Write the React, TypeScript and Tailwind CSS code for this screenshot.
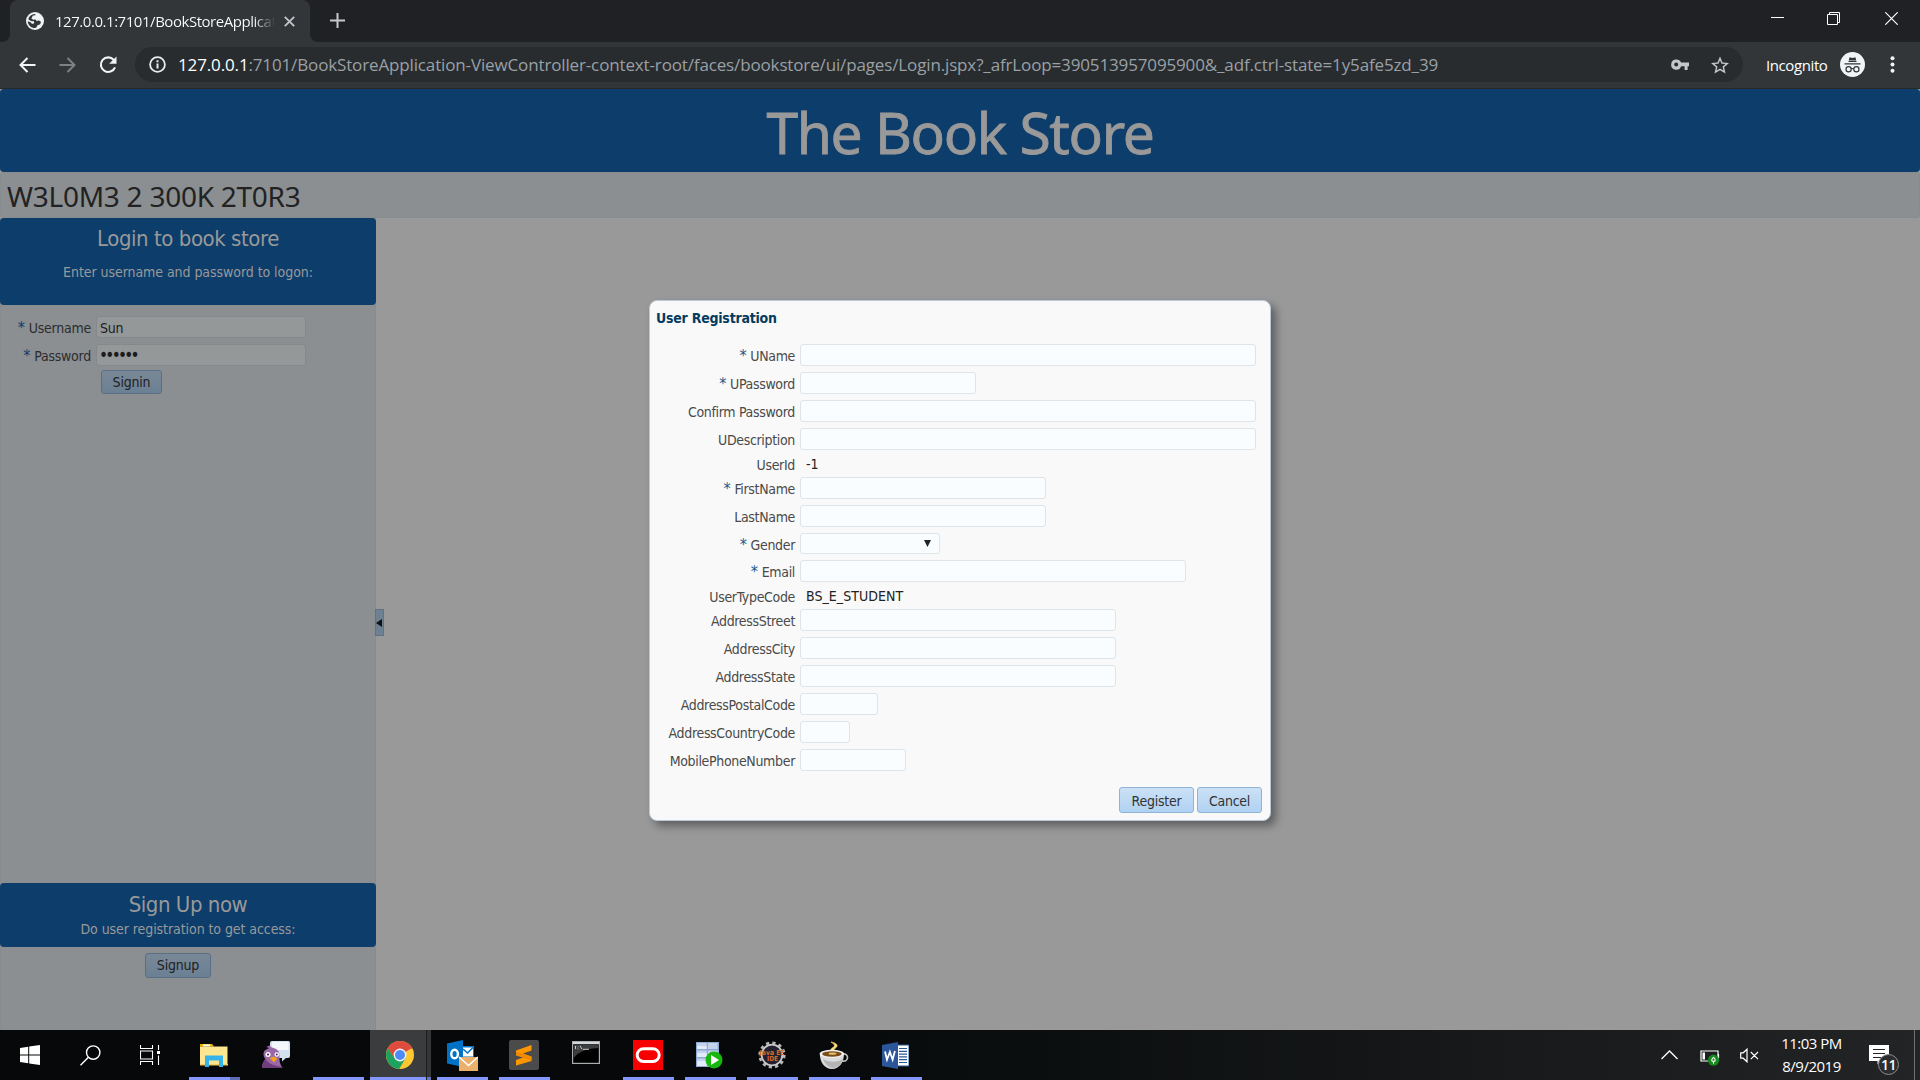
import React from "react";

const cls = (...parts: (string | false | undefined)[]) => parts.filter(Boolean).join(" ");

/* ---------- Browser chrome ---------- */

function TabStrip() {
  return (
    <div className="flex h-[42px] bg-[#202124]">
      <div className="flex w-[10px] items-end bg-[#323639]">
        <div className="h-full w-full rounded-br-[8px] bg-[#202124]" />
      </div>
      <div className="flex h-[42px] w-[300px] items-center rounded-t-[8px] bg-[#323639] pl-[16px]">
        <svg width="18" height="18" viewBox="2 2 20 20" className="shrink-0">
          <circle cx="12" cy="12" r="10" fill="#f1f3f4" />
          <path
            d="M13 5.2 9.5 6.3 8 9.2l2.2 1.3 2.6-.3 1 1.7 2.6-.4 2.2 1.2-.8 2.8-3 1.2-1.3 2.4-1.6.8c-4.4 0-7.8-3.3-7.9-7.6l3.6 1.5 1 1.6 2.5-.8-.3-2.3-3.3-.4L4.5 10C5.4 6.600 8.300 4.400 11.800 4.300z"
            fill="#323639"
          />
        </svg>
        <span className="ml-[11px] w-[220px] overflow-hidden whitespace-nowrap bg-gradient-to-r from-white from-90% to-transparent bg-clip-text text-[15px] leading-[20px] tracking-[-0.46px] text-transparent">
          127.0.0.1:7101/BookStoreApplicat
        </span>
        <svg width="11" height="11" viewBox="0 0 11 11" className="ml-[9px] shrink-0" stroke="#c0c4c8" strokeWidth="1.9">
          <path d="M.8.8l9.400 9.400M10.200.8.8 10.200" />
        </svg>
      </div>
      <div className="w-[9px] bg-[#323639]">
        <div className="h-full w-full rounded-bl-[8px] bg-[#202124]" />
      </div>
      <svg width="15" height="15" viewBox="0 0 15 15" className="ml-[11px] mt-[13px]" stroke="#c7cacd" strokeWidth="2">
        <path d="M7.500 0v15M0 7.500h15" />
      </svg>
      <div className="flex-1" />
      <svg width="13" height="13" viewBox="0 0 13 13" className="mr-[43px] mt-[12px]" stroke="#fff">
        <path d="M0 5.500h13" />
      </svg>
      <svg width="13" height="13" viewBox="0 0 13 13" className="mr-[45px] mt-[12px]" stroke="#fff" fill="none">
        <path d="M.5 2.500h10v10h-10zM2.500 2.500v-2h10v10h-2" />
      </svg>
      <svg width="13" height="13" viewBox="0 0 13 13" className="mr-[22px] mt-[12px]" stroke="#fff" strokeWidth="1.200">
        <path d="M.3.3l12.400 12.400M12.700.3.3 12.700" />
      </svg>
    </div>
  );
}

function Toolbar() {
  return (
    <div className="flex h-[47px] items-center border-b border-[#26282a] bg-[#323639] pb-[1px]">
      <svg width="17" height="16" viewBox="0 0 17 16" className="ml-[19px]" fill="none" stroke="#f1f3f4" strokeWidth="2">
        <path d="M16.500 8H2M8.500 1 1.500 8l7 7" />
      </svg>
      <svg width="17" height="16" viewBox="0 0 17 16" className="ml-[23px]" fill="none" stroke="#7d8184" strokeWidth="2">
        <path d="M.5 8H15M8.500 1l7 7-7 7" />
      </svg>
      <svg width="18" height="18" viewBox="0 0 18 18" className="ml-[23px]">
        <path d="M14.800 4A7.300 7.300 0 1 0 16 11.300" fill="none" stroke="#f1f3f4" strokeWidth="2.100" />
        <path d="M17.500.5v7.300h-7.300z" fill="#f1f3f4" />
      </svg>
      <div className="ml-[18px] flex h-[35px] w-[1608px] items-center rounded-full bg-[#282c2f] pl-[14px] pr-[14px]">
        <svg width="17" height="17" viewBox="0 0 17 17" fill="none" stroke="#e8eaed" strokeWidth="1.800">
          <circle cx="8.500" cy="8.500" r="7.400" />
          <path d="M8.500 7.500v5M8.500 4.300v1.900" strokeWidth="2" />
        </svg>
        <span className="ml-[12px] whitespace-nowrap text-[17px] leading-[24px] tracking-[-0.14px] text-[#9aa0a6]">
          <span className="text-white">127.0.0.1</span>
          :7101/BookStoreApplication-ViewController-context-root/faces/bookstore/ui/pages/Login.jspx?_afrLoop=390513957095900&_adf.ctrl-state=1y5afe5zd_39
        </span>
        <div className="flex-1" />
        <svg width="18" height="12" viewBox="0 0 18 12" fill="#c4c7ca">
          <path
            fillRule="evenodd"
            d="M5.200.6a5.100 5.100 0 1 0 4.900 6.700h3.500V11h3V7.300H18V3.600h-7.900A5.200 5.200 0 0 0 5.200.6zm0 3a2 2 0 1 1 0 4 2 2 0 0 1 0-4z"
          />
        </svg>
        <svg width="18" height="18" viewBox="2 2 20 19" className="ml-[22px]" fill="#c4c7ca">
          <path d="M22 9.240l-7.190-.62L12 2 9.190 8.630 2 9.240l5.460 4.730L5.820 21 12 17.270 18.180 21l-1.630-7.030L22 9.240zM12 15.400l-3.760 2.270 1-4.280-3.320-2.880 4.380-.38L12 6.100l1.710 4.040 4.380.38-3.320 2.880 1 4.280L12 15.400z" />
        </svg>
      </div>
      <span className="ml-[23px] w-[64px] whitespace-nowrap text-[15px] leading-[20px] tracking-[-0.4px] text-white">Incognito</span>
      <svg width="25" height="25" viewBox="0 0 25 25" className="ml-[10px]">
        <circle cx="12.500" cy="12.500" r="12.500" fill="#f1f3f4" />
        <path d="M8.700 8.500 9.600 5.200l2.900.8 2.900-.8.9 3.300z" fill="#323639" />
        <path d="M8.500 9.500h8M4.500 11.800h16" stroke="#323639" strokeWidth="1.200" />
        <g fill="none" stroke="#323639" strokeWidth="1.200">
          <circle cx="8.600" cy="17.300" r="2.600" />
          <circle cx="16.400" cy="17.300" r="2.600" />
          <path d="M11.200 17q1.300-1 2.600 0" />
        </g>
      </svg>
      <svg width="5" height="17" viewBox="0 0 5 17" className="ml-[25px]" fill="#f1f3f4">
        <circle cx="2.500" cy="2.200" r="2" />
        <circle cx="2.500" cy="8.500" r="2" />
        <circle cx="2.500" cy="14.800" r="2" />
      </svg>
    </div>
  );
}

/* ---------- Page behind the dialog ---------- */

function LoginField({ label, type, value }: { label: string; type: string; value: string }) {
  return (
    <div className="flex h-[28px] items-center">
      <div className="w-[90px] whitespace-nowrap pt-[3px] text-right text-[14px] leading-[17px] tracking-[-0.25px] text-[#2b2d2e]">
        <span className="mr-[4px] text-[16px] leading-none text-[#0d3d6b]">*</span>
        {label}
      </div>
      <input
        type={type}
        defaultValue={value}
        className={cls(
          "ml-[5px] h-[22px] w-[210px] rounded-[3px] border border-[#85898b] bg-[#959899] pt-px text-[#1c1c1c]",
          type === "password" ? "pl-[2px] pt-[3px] text-[17px] tracking-[-2.7px]" : "pl-[3px] text-[14px] tracking-[-0.3px]",
        )}
      />
    </div>
  );
}

function DimButton({ children, className }: { children: string; className: string }) {
  return (
    <button
      className={cls(
        "block rounded-[3px] border border-[#596f86] bg-gradient-to-b from-[#798896] to-[#6b8094] text-center text-[14px] leading-[20px] text-[#1f2123]",
        className,
      )}
    >
      {children}
    </button>
  );
}

function SidePanel() {
  return (
    <div className="flex w-[376px] flex-col border-x border-[#888c8e] bg-[#8b8f92]">
      <div className="-mx-px h-[87px] rounded-[4px] bg-[#0d3d6b] text-center text-[#999]">
        <div className="pt-[7px] text-[22px] leading-[28px] tracking-[-0.45px]">Login to book store</div>
        <div className="mt-[10px] text-[14px] leading-[18px] tracking-[-0.06px]">Enter username and password to logon:</div>
      </div>
      <div className="flex-1 pt-[8px]">
        <LoginField label="Username" type="text" value="Sun" />
        <LoginField label="Password" type="password" value="secret" />
        <DimButton className="ml-[100px] mt-[1px] h-[24px] w-[61px] tracking-[-0.2px]">Signin</DimButton>
      </div>
      <div className="-mx-px h-[64px] rounded-[4px] bg-[#0d3d6b] text-center text-[#999]">
        <div className="pt-[8px] text-[22px] leading-[28px] tracking-[-0.45px]">Sign Up now</div>
        <div className="mt-[1px] text-[14px] leading-[18px] tracking-[-0.07px]">Do user registration to get access:</div>
      </div>
      <div className="h-[83px]">
        <DimButton className="ml-[144px] mt-[6px] h-[25px] w-[66px] pb-[2px] tracking-[-0.2px]">Signup</DimButton>
      </div>
    </div>
  );
}

/* ---------- Registration dialog ---------- */

type Field = { label: string; required?: boolean; width?: string; text?: string; select?: boolean };

const fields: Field[] = [
  { label: "UName", required: true, width: "w-[456px]" },
  { label: "UPassword", required: true, width: "w-[176px]" },
  { label: "Confirm Password", width: "w-[456px]" },
  { label: "UDescription", width: "w-[456px]" },
  { label: "UserId", text: "-1" },
  { label: "FirstName", required: true, width: "w-[246px]" },
  { label: "LastName", width: "w-[246px]" },
  { label: "Gender", required: true, select: true },
  { label: "Email", required: true, width: "w-[386px]" },
  { label: "UserTypeCode", text: "BS_E_STUDENT" },
  { label: "AddressStreet", width: "w-[316px]" },
  { label: "AddressCity", width: "w-[316px]" },
  { label: "AddressState", width: "w-[316px]" },
  { label: "AddressPostalCode", width: "w-[78px]" },
  { label: "AddressCountryCode", width: "w-[50px]" },
  { label: "MobilePhoneNumber", width: "w-[106px]" },
];

function FormRow({ field }: { field: Field }) {
  const height = field.text ? "h-[21px]" : field.select ? "h-[27px]" : "h-[28px]";
  return (
    <div className={cls("flex items-center", height)}>
      <div className="w-[145px] whitespace-nowrap pt-[3px] text-right text-[14px] leading-[17px] tracking-[-0.33px] text-[#4a4a4a]">
        {field.required && <span className="mr-[4px] text-[16px] leading-none text-[#1c5a8c]">*</span>}
        {field.label}
      </div>
      {field.text && <span className="ml-[11px] pt-[1px] text-[14px] leading-[17px] tracking-[0.05px] text-[#222]">{field.text}</span>}
      {field.select && (
        <div className="ml-[5px] flex h-[21px] w-[140px] items-center justify-end rounded-[3px] border border-[#dfe4e7] bg-[#fafdff] pr-[8px]">
          <svg width="7" height="7" viewBox="0 0 7 7" fill="#222">
            <path d="M0 0h7L3.500 7z" />
          </svg>
        </div>
      )}
      {field.width && (
        <input className={cls("ml-[5px] h-[22px] rounded-[3px] border border-[#dfe4e7] bg-[#fafdff]", field.width)} />
      )}
    </div>
  );
}

function DialogButton({ children, className }: { children: string; className: string }) {
  return (
    <button
      className={cls(
        "h-[26px] rounded-[3px] border border-[#8fb4d6] bg-gradient-to-b from-[#cbe1f6] to-[#b0d2f2] pt-[2px] text-[14px] leading-[20px] tracking-[-0.25px] text-[#333]",
        className,
      )}
    >
      {children}
    </button>
  );
}

function RegistrationDialog() {
  return (
    <div className="absolute left-[649px] top-[300px] h-[521px] w-[622px] rounded-[8px] border border-[#b9c9d9] bg-[#f9f9f9] shadow-[5px_5px_8px_rgba(0,0,0,0.38)]">
      <h2 className="pl-[6px] pt-[8px] text-[14px] font-bold leading-[18px] tracking-[-0.23px] text-[#043b5e]">User Registration</h2>
      <div className="pt-[14px]">
        {fields.map((f) => (
          <FormRow key={f.label} field={f} />
        ))}
      </div>
      <div className="mt-[13px] flex justify-end gap-[3px] pr-[8px]">
        <DialogButton className="w-[75px]">Register</DialogButton>
        <DialogButton className="w-[65px]">Cancel</DialogButton>
      </div>
    </div>
  );
}

/* ---------- Taskbar ---------- */

function ExplorerIcon() {
  return (
    <svg width="28" height="24" viewBox="0 0 28 24">
      <path d="M0 1h12l2 2.500H0z" fill="#f5b800" />
      <path d="M0 3.500h27.500V22H0z" fill="#fde68f" />
      <path d="M0 1h2v3H0z" fill="#e7a800" />
      <path d="M3 1.500h7v1.800H3z" fill="#fff" />
      <path d="M0 21h28v1.500H0z" fill="#f2cd5c" />
      <path d="M5 24V12.500h18V24h-4v-6.500H9V24z" fill="#36b3ea" />
    </svg>
  );
}

function PidginIcon() {
  return (
    <svg width="30" height="28" viewBox="0 0 30 28">
      <path d="M11 0h16.500q1.500 0 1.500 2v13q0 2-2 2h-2l-4 3.500V17H9V2q0-2 2-2z" fill="#d3e0ef" />
      <path d="M11 1h16.500v8H11z" fill="#f3f8fd" />
      <path d="M5 5.500c1.500 0 2.500-.5 4-1 .5 1.500 1.500 2 3.500 2.500 4 1 6 4 6 7.500 0 4-.5 7 3 12.500H1c0-4 1.500-6.500 3.300-9C2.500 16 2 12.500 3 10.500c1-2 3.500-2.500 5-3.500-1-.2-2-.7-3-1.500z" fill="#9a67a8" />
      <path d="M1 27c0-4 1.500-6.500 3.300-9 4 6 12 7 16.200 8l1 1z" fill="#6f3d7d" />
      <circle cx="7" cy="13.500" r="2.500" fill="#fff" />
      <circle cx="15.800" cy="13.500" r="2.300" fill="#fff" />
      <circle cx="7" cy="13.500" r="1.100" fill="#49265a" />
      <circle cx="15.800" cy="13.500" r="1" fill="#49265a" />
      <path d="M8.500 17l4-1.500 4 2-3.500 4z" fill="#f5a11d" />
    </svg>
  );
}

function ChromeIcon() {
  return (
    <svg width="28" height="28" viewBox="0 0 28 28">
      <circle cx="14" cy="14" r="14" fill="#fbc833" />
      <path d="M14 14 1.900 7A14 14 0 0 1 26.100 7z" fill="#dd4b3e" />
      <path d="M1.900 7A14 14 0 0 0 13.200 28l6.300-10.800L8.500 17z" fill="#1da260" />
      <path d="M14 7.600h12.500L26 7A14 14 0 0 0 1.900 7l6.500 10.500z" fill="#dd4b3e" />
      <circle cx="14" cy="14" r="6.400" fill="#f1f3f4" />
      <circle cx="14" cy="14" r="5" fill="#4c8bf5" />
    </svg>
  );
}

function OutlookIcon() {
  return (
    <svg width="31" height="31" viewBox="0 0 31 31" className="ml-[2px]">
      <path d="M14 6h13v13H14z" fill="#0a74c8" />
      <path d="M15.500 7.500h10.500v9H15.500z" fill="#fff" />
      <path d="M16 9l4.500 4L26 7.500" fill="none" stroke="#0a74c8" strokeWidth="1.600" />
      <path d="M0 3.500 16 0v27L0 23.500z" fill="#0072c6" />
      <ellipse cx="7.600" cy="14" rx="3.300" ry="4.300" fill="none" stroke="#fff" strokeWidth="2.400" />
      <path d="M12 17h19v14H12z" fill="#ebb06b" />
      <path d="M12 17l9.500 8.500L31 17" fill="none" stroke="#fff" strokeWidth="1.400" />
    </svg>
  );
}

function SublimeIcon() {
  return (
    <svg width="30" height="30" viewBox="0 0 30 30">
      <rect width="30" height="30" rx="2" fill="#4b4b4b" />
      <path d="M7 10.500 22.500 5v5.500L14 13.500l8.500 3v4.500L7 25.500V20l8.500-3L7 15z" fill="#ff9800" />
      <path d="M7 15.500v-4l15.500 5.300v3.700z" fill="#ef8a00" />
    </svg>
  );
}

function TerminalIcon() {
  return (
    <svg width="28" height="23" viewBox="0 0 28 23" className="-mt-[5px]">
      <rect x=".6" y=".6" width="26.800" height="21.800" fill="#000" stroke="#a8adb0" strokeWidth="1.200" />
      <path d="M1 1h26v2.200H1z" fill="#d4d7d9" />
      <path d="M1.500 3.500h25v3.500Q10 7 1.500 17z" fill="#3b3d3e" />
      <path d="M3.500 5v3M6 5.500v.8M6 7.500v.8M8 4.800l2 3.400M11 8.300h6" stroke="#d9d9d9" strokeWidth=".9" />
    </svg>
  );
}

function OracleIcon() {
  return (
    <svg width="30" height="30" viewBox="0 0 30 30">
      <path d="M0 0h30v30H0z" fill="#f80000" />
      <rect x="4.200" y="8.700" width="22" height="12.800" rx="6.400" fill="none" stroke="#fff" strokeWidth="2.900" />
    </svg>
  );
}

function SqlDeveloperIcon() {
  return (
    <svg width="27" height="27" viewBox="0 0 27 27" className="-ml-px">
      <path d="M0 0h23v25H0z" fill="#8ea9d3" />
      <path d="M1.200 1h9.500v6H1.200zM12 1h9.500v6H12zM1.200 8.500h9.500V15H1.200zM12 8.500h9.500V15H12zM1.200 16.500h9.500V24H1.200zM12 16.500h9.500V24H12z" fill="#c3d4ec" />
      <path d="M1.200 4h9.500v3H1.200zM1.200 11h9.500v4H1.200zM1.200 19h9.500v5H1.200z" fill="#e2ebf7" />
      <circle cx="18" cy="18" r="8.500" fill="#16b80e" />
      <path d="M15 13v10l8-5z" fill="#fff" />
    </svg>
  );
}

function JavaEeIcon() {
  return (
    <svg width="34" height="30" viewBox="-2 -1 34 30">
      <circle cx="15" cy="14" r="12.300" fill="none" stroke="#b9b9b9" strokeWidth="2.600" strokeDasharray="3.200 3.240" />
      <circle cx="15" cy="14" r="10.300" fill="#25202f" stroke="#c9c9c9" strokeWidth="1.800" />
      <text x="2.500" y="13.500" fontSize="7" fontWeight="700" fill="#d9692a" fontFamily="DejaVu Sans" textLength="25" lengthAdjust="spacingAndGlyphs">
        Java EE
      </text>
      <text x="10" y="20" fontSize="7" fontWeight="700" fill="#d9692a" fontFamily="DejaVu Sans" textLength="11" lengthAdjust="spacingAndGlyphs">
        IDE
      </text>
    </svg>
  );
}

function CoffeeIcon() {
  return (
    <svg width="30" height="30" viewBox="0 0 30 30">
      <path d="M14.500 13c-3-2-4-3.500-.5-5.500 3-1.600 1-3.800-2-5.500 5.500 1 8 3.600 4.500 6-2.500 1.800-1.500 3 0 5z" fill="#f8e08c" stroke="#f1c75a" strokeWidth=".8" />
      <ellipse cx="24.500" cy="17.500" rx="4" ry="3.700" fill="none" stroke="#bdbdbd" strokeWidth="1.700" />
      <path d="M.8 13.500C.8 22 5.500 29 13 29s12-7 12-15.500z" fill="#dcdcdc" />
      <path d="M4 19c2 6 6 8.500 10 9 5-.5 8.500-3 10-9-4 3-14 4-20 0z" fill="#b5b5b5" />
      <ellipse cx="12.900" cy="13.800" rx="12.200" ry="4" fill="#f2f2f2" />
      <ellipse cx="12.900" cy="14" rx="9.800" ry="2.700" fill="#7a4d1b" />
      <ellipse cx="13.500" cy="13.600" rx="4" ry="1.200" fill="#e9c56c" />
    </svg>
  );
}

function WordIcon() {
  return (
    <svg width="27" height="27" viewBox="0 0 27 27">
      <path d="M13 3h14v21H13z" fill="#fff" stroke="#2b579a" />
      <path d="M17 6.500h8M17 9.300h8M17 12.100h8M17 14.900h8M17 17.700h8M17 20.500h8" stroke="#2b579a" strokeWidth="1.200" />
      <path d="M0 3 16 0v27L0 24z" fill="#2b579a" />
      <path d="M3 9.500l2 8.200L7.900 10l2.700 7.700 2.300-8.700" fill="none" stroke="#fff" strokeWidth="1.800" />
    </svg>
  );
}

type TaskApp = { name: string; icon?: React.ReactNode; running?: boolean; stacked?: boolean; active?: boolean };

const apps: TaskApp[] = [
  { name: "explorer", icon: <ExplorerIcon />, running: true, stacked: true },
  { name: "pidgin", icon: <PidginIcon /> },
  { name: "blank", running: true },
  { name: "chrome", icon: <ChromeIcon />, running: true, active: true },
  { name: "outlook", icon: <OutlookIcon />, running: true },
  { name: "sublime", icon: <SublimeIcon />, running: true },
  { name: "terminal", icon: <TerminalIcon /> },
  { name: "oracle", icon: <OracleIcon />, running: true },
  { name: "sqldeveloper", icon: <SqlDeveloperIcon />, running: true },
  { name: "javaee", icon: <JavaEeIcon />, running: true },
  { name: "coffee", icon: <CoffeeIcon />, running: true },
  { name: "word", icon: <WordIcon />, running: true },
];

function TaskButton({ app }: { app: TaskApp }) {
  if (app.active) {
    return (
      <div className="flex h-full w-[62px] pl-px">
        <div className="flex w-[56px] flex-col items-center bg-[#3b3c3d]">
          <div className="flex flex-1 items-center pl-[3px] pt-[2px]">{app.icon}</div>
          <div className="h-[3px] w-full bg-[#8496ff]" />
        </div>
        <div className="flex w-[5px] flex-col border-l border-[#1d1e1f] bg-[#343536]">
          <div className="flex-1" />
          <div className="h-[3px] bg-[#6774c4]" />
        </div>
      </div>
    );
  }
  return (
    <div className="flex h-full w-[62px] flex-col items-center">
      <div className="flex flex-1 items-center pr-px pt-[3px]">{app.icon}</div>
      <div className="flex h-[3px] w-[51px]">
        {app.running && <div className="flex-1 bg-[#8496ff]" />}
        {app.stacked && <div className="w-[10px] bg-[#5f6bb5]" />}
      </div>
    </div>
  );
}

function Taskbar() {
  return (
    <div className="flex h-[50px] items-center bg-gradient-to-r from-[#060809] from-40% to-[#222425] text-white">
      <div className="flex w-[60px] justify-center">
        <svg width="20" height="20" viewBox="0 0 20 20" fill="#fff">
          <path d="M0 3l8.200-1.200v7.700H0zM9.200 1.600 20 0v9.500H9.200zM0 10.500h8.200v7.800L0 17.100zM9.200 10.500H20V20L9.200 18.400z" />
        </svg>
      </div>
      <div className="flex w-[60px] justify-center">
        <svg width="21" height="21" viewBox="0 0 21 21" fill="none" stroke="#fff" strokeWidth="1.400">
          <circle cx="13.200" cy="7.600" r="6.700" />
          <path d="M8.400 12.300.5 20.300" />
        </svg>
      </div>
      <div className="flex w-[60px] justify-center">
        <svg width="20" height="20" viewBox="0 0 20 20" fill="none" stroke="#fff" strokeWidth="1.100">
          <path d="M.5 0v3.500h12V0M.5 20v-3.500h12V20M.5 6h12v8H.5zM18.500 0v5M18.500 10.500V20" />
          <path d="M17 6h3v3h-3z" fill="#fff" stroke="none" />
        </svg>
      </div>
      <div className="ml-[3px] flex h-full">
        {apps.map((a) => (
          <TaskButton key={a.name} app={a} />
        ))}
      </div>
      <div className="flex-1" />
      <svg width="17" height="10" viewBox="0 0 17 10" fill="none" stroke="#fff" strokeWidth="1.300">
        <path d="M.5 9l8-8 8 8" />
      </svg>
      <svg width="20" height="17" viewBox="0 0 20 17" className="ml-[22px] mt-[4px]" fill="none">
        <path d="M1 2h17v10H1zM18.500 5v4" stroke="#fff" strokeWidth="1.200" />
        <path d="M2.500 3.500H5v7H2.500z" fill="#fff" />
        <circle cx="13.500" cy="11.200" r="5.600" fill="#15891f" />
        <path d="M13.500 8.400q-2.600 2.400-1.200 3.900h2.400q1.400-1.500-1.200-3.900zM13.500 12.300v2.400" stroke="#fff" strokeWidth="1.100" />
      </svg>
      <svg width="19" height="15" viewBox="0 0 19 15" className="ml-[20px]" fill="none" stroke="#fff" strokeWidth="1.200">
        <path d="M.7 4.800h2.500L7 1.200v12.600L3.200 10.200H.7zM10.800 4l7.200 7.200M18 4l-7.200 7.200" />
      </svg>
      <div className="ml-[15px] w-[75px] whitespace-nowrap text-center text-[15px] leading-[23px] tracking-[-0.5px]">
        <div>11:03 PM</div>
        <div>8/9/2019</div>
      </div>
      <div className="relative ml-[20px] h-[20px] w-[30px]">
        <svg width="20" height="20" viewBox="0 0 20 20">
          <path d="M0 0h20v16h-8l-3.500 3.500V16H0z" fill="#fff" />
          <path d="M4 4.500h12M4 8.500h12M4 12.500h8" stroke="#222425" strokeWidth="1.100" />
        </svg>
        <div className="absolute left-[9px] top-[9px] flex h-[21px] w-[21px] items-center justify-center rounded-full border border-[#8b8d8e] bg-[#2b2d2e] text-[14px] font-semibold leading-none tracking-[-0.5px]">
          11
        </div>
      </div>
      <div className="ml-[15px] h-full w-px bg-[#6f7172]" />
      <div className="w-[5px]" />
    </div>
  );
}

export default function App() {
  return (
    <div className="relative flex h-[1080px] w-[1920px] flex-col overflow-hidden bg-[#999] font-['Open_Sans',sans-serif]">
      <TabStrip />
      <Toolbar />
      <main className="flex flex-1 flex-col font-['DejaVu_Sans_Condensed','DejaVu_Sans',sans-serif] [font-stretch:condensed]">
        <header className="flex h-[83px] items-center justify-center rounded-[4px] bg-[#0d3d6b] pt-[4px] font-['Noto_Sans',sans-serif] text-[57px] leading-none tracking-[-1.35px] text-[#999] [-webkit-text-stroke:0.8px_#999] [font-stretch:normal]">
          The Book Store
        </header>
        <div className="flex h-[46px] items-center rounded-[3px] border border-[#878c8f] bg-[#8b8f92] pl-[6px] pt-[2px] font-['Noto_Sans',sans-serif] text-[28px] leading-none tracking-[-0.26px] text-[#222] [font-stretch:normal]">
          W3L0M3 2 300K 2T0R3
        </div>
        <div className="flex flex-1">
          <SidePanel />
          <div className="-ml-px mt-[391px] flex h-[27px] w-[9px] items-center justify-start border border-[#5f7286] bg-[#6d8192]">
            <svg width="6" height="8" viewBox="0 0 6 8">
              <path d="M6 0v8L0 4z" fill="#111" />
            </svg>
          </div>
        </div>
        <RegistrationDialog />
      </main>
      <Taskbar />
    </div>
  );
}
